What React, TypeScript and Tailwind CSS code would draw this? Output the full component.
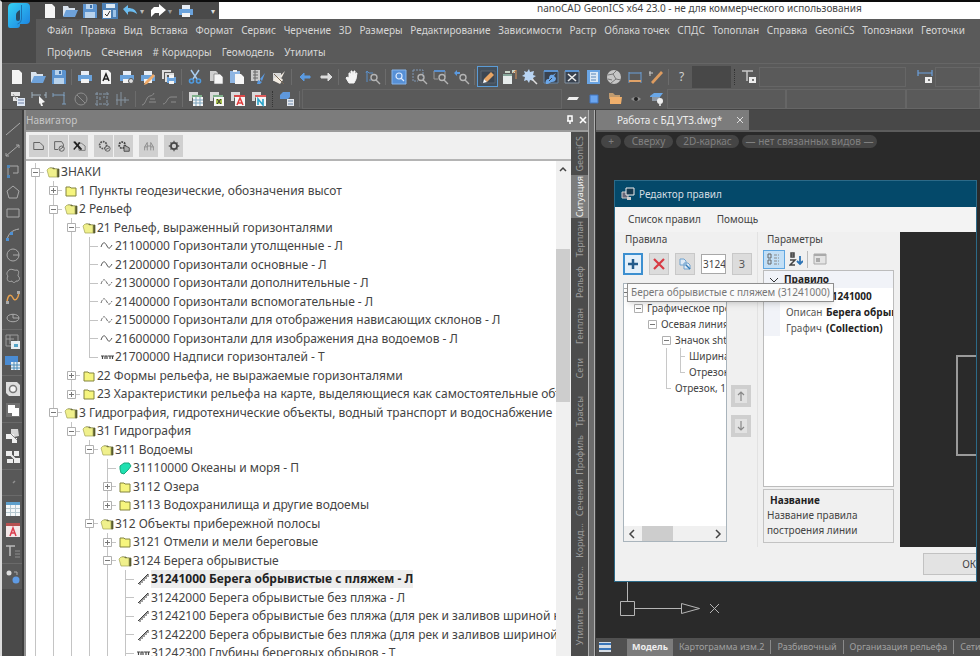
import type { ReactNode } from "react";
import clsx from "clsx";

const pageShape = <path d="M3 1h7l3 3v11H3z" fill="#f4f4f4" />;
const printerShape = (
  <>
    <path d="M4 2h8v4H4z" fill="#e8eef6" />
    <path d="M1 6h14v6H1z" fill="#6ba3dc" />
    <path d="M4 10h8v4H4z" fill="#f2f2f2" />
  </>
);
const lens = <path d="M12 8.500a3 3 0 1 1-6 0a3 3 0 0 1 6 0M11 11l4 4" fill="none" stroke="#b4b4b4" strokeWidth="1.400" />;
const sheets = (
  <>
    <path d="M1 1h9v3H4v6H1z" fill="#d9d9d9" />
    <path d="M4 4h10v3H4z" fill="#7fb08a" />
    <path d="M5 6h10v9H5z" fill="#f6f6f6" />
  </>
);

const icons: Record<string, ReactNode> = {
  page: pageShape,
  folder: (
    <>
      <path d="M1 3h5l1 2h6v8H1z" fill="#d9e3ee" />
      <path d="M4 7h12l-3 7H1z" fill="#6ea2da" />
    </>
  ),
  save: (
    <>
      <path d="M1 1h13l1 1v13H1z" fill="#5b93cf" />
      <path d="M4 1h7v5H4zM3 9h10v6H3z" fill="#b9d3ec" />
      <path d="M8 2h2v3H8z" fill="#3c6fa8" />
    </>
  ),
  saveAll: (
    <>
      <path d="M0 0h16v16H0z" fill="#4b7fb5" />
      <path d="M4 1h9v4H4z" fill="#dce9f5" />
      <path d="M1 7h8v8H1z" fill="#f4f4f4" />
      <path d="M3 11l2 2 3-5" fill="none" stroke="#333" />
      <path d="M11 7h3v7h-3z" fill="#9dc3e8" />
    </>
  ),
  undo: <path d="M1 6l5-4v3c5 0 8 2 9 6-3-2-5-3-9-2v3z" fill="#6cbdf0" />,
  redo: <path d="M16 7l-7-6v3H4L1 7v7l4-4h4v3z" fill="#fff" />,
  printer: printerShape,
  pageA: (
    <>
      {pageShape}
      <path d="M5 12l3-7 3 7M6 10h4" fill="none" stroke="#222" strokeWidth="1.500" />
    </>
  ),
  printGear: (
    <>
      {printerShape}
      <circle cx="12" cy="12" r="2.500" fill="#ddd" stroke="#555" />
    </>
  ),
  printPencil: (
    <>
      {printerShape}
      <path d="M5 13l8-8 2 2-8 8-3 1z" fill="#efaa68" />
    </>
  ),
  printStack: (
    <>
      <path d="M1 1h9v2H3v7H1z" fill="#ddd" />
      <path d="M4 4h9v2H6v7H4z" fill="#ddd" />
      <path d="M6 8h9v6H6z" fill="#6ba3dc" />
      <path d="M8 6h5v3H8zM8 12h5v3H8z" fill="#f4f4f4" />
    </>
  ),
  scissors: (
    <>
      <path d="M4 1l6 9M12 1L6 10" stroke="#a9cdf0" strokeWidth="1.500" />
      <path d="M6.500 12a2 2 0 1 1-4 0a2 2 0 0 1 4 0M13.500 12a2 2 0 1 1-4 0a2 2 0 0 1 4 0" fill="none" stroke="#4f9be0" strokeWidth="1.600" />
    </>
  ),
  copy: (
    <>
      <path d="M2 2h6l2 2v8H2z" fill="#cfcfcf" />
      <path d="M6 5h6l3 3v7H6z" fill="#f6f6f6" stroke="#666" strokeWidth=".6" />
    </>
  ),
  paste: (
    <>
      <path d="M1 2h10v12H1z" fill="#8eb5e2" />
      <path d="M4 1h4v2H4z" fill="#eee" />
      <path d="M6 5h6l3 3v7H6z" fill="#f6f6f6" />
    </>
  ),
  match: (
    <>
      <path d="M1 1h9v11H1z" fill="#c9c9c9" />
      <path d="M3 3h5M3 6h5M3 9h5M5 1v11" stroke="#666" />
      <path d="M15 4l-5 6 2 2zM8 11l4 2-2 2H7z" fill="#5b9ae0" />
    </>
  ),
  brush: (
    <>
      <path d="M2 4h8v8H2z" fill="#d8d8d8" />
      <path d="M14 2L8 8l2 2zM3 9l6-2 3 4-3 4-6-3z" fill="#f3ece2" />
      <path d="M3 5l3 3 7 7" stroke="#7a6a58" />
    </>
  ),
  back: <path d="M3 8l4-4v3h6v2H7v3z" fill="#5b9ae0" stroke="#5b9ae0" />,
  forward: <path d="M14 8l-4-4v3H3v2h7v3z" fill="#dcdcdc" stroke="#dcdcdc" />,
  hand: <path d="M5 14L2 9l1-1 2 1V4h1l1 3V2h1l1 4 1-4h1v5l1-3h1l-1 6-2 4z" fill="#f5f5f5" stroke="#f5f5f5" />,
  zoomLine: (
    <>
      <path d="M2 2v11M1 4l1-2 2 2M4 4h4M4 11h2" stroke="#5b8fc8" fill="none" />
      {lens}
    </>
  ),
  zoomBlue: (
    <>
      <path d="M1 1h14v14H1z" fill="#5790d6" stroke="#86b4ea" />
      <path d="M11 7a3 3 0 1 1-6 0a3 3 0 0 1 6 0M10 9l3 3" fill="none" stroke="#dceaff" strokeWidth="1.200" />
    </>
  ),
  zoomWin: (
    <>
      <path d="M1 1h10v9M1 1v11h5" fill="none" stroke="#7f97b5" strokeDasharray="2 1" />
      {lens}
    </>
  ),
  zoomSheet: (
    <>
      <path d="M1 2h11v6M1 2v8h4" fill="none" stroke="#999" />
      <path d="M1 1h11v2H1z" fill="#5a8fcd" />
      {lens}
    </>
  ),
  zoomPrev: (
    <>
      <path d="M0 4l3-3v2h3v2H3v2z" fill="#5b9ae0" />
      {lens}
    </>
  ),
  edit: (
    <>
      <path d="M1 2h14v12H1z" fill="#3c4652" stroke="#59636e" />
      <path d="M4 10l7-7 3 3-7 7z" fill="#e8a565" />
      <path d="M3 14l1-4 3 3z" fill="#fff" />
    </>
  ),
  props: (
    <>
      <path d="M4 2h5v2H4zM11 1h3v3h-3z" fill="#c7d4c7" />
      <path d="M2 5h9v10H2z" fill="#e7ecec" />
      <path d="M2 5h9v2H2z" fill="#87a79b" />
      <path d="M12 4l3-3v9" stroke="#d7925a" fill="none" />
    </>
  ),
  burst: (
    <>
      <path d="M7 0l1 3 4-1-1 4 3 1-3 2 1 3-4-1-1 3-2-3-3 1 1-4-3-1 3-2-1-3 3 1z" fill="#b9d4f3" />
      <path d="M10 10l5 5" stroke="#ddd" strokeWidth="1.500" />
    </>
  ),
  blueGear: (
    <>
      <path d="M1 2h14v12H1z" fill="#39424f" stroke="#6585a8" />
      <path d="M1 1h14v2H1z" fill="#5a92d0" />
      <path d="M3 15c-1-3 0-5 3-5 0-3 1-5 4-4l3-2-2 3 2 2c0 3-2 4-4 4s-2 2-6 2z" fill="#6ca7e8" />
      <path d="M6 12l3-3" stroke="#39424f" />
    </>
  ),
  tools: (
    <>
      <path d="M1 2h14v12H1z" fill="#39424f" stroke="#8493a3" />
      <path d="M1 1h14v2H1z" fill="#5a92d0" />
      <path d="M4 5l8 7M12 5l-8 7" stroke="#ececec" strokeWidth="1.600" />
    </>
  ),
  book: (
    <>
      <path d="M2 1h13v14H2z" fill="#6aa5e4" />
      <path d="M5 3h8v10H5z" fill="#dce9f6" />
      <path d="M6 5h5M6 8h5M6 11h5" stroke="#5a87b8" />
    </>
  ),
  ball: (
    <>
      <circle cx="8" cy="8" r="7" fill="#c6c6c6" />
      <path d="M2 6l5-1 4-4M7 5l3 5 5 1M10 10l-5 4M2 10l4 1" stroke="#777" fill="none" />
    </>
  ),
  ruler: (
    <>
      <path d="M2 3v11M14 3v11" stroke="#6b9fd8" />
      <path d="M2 4h12" stroke="#6b9fd8" />
      <path d="M2 12h12" stroke="#e0a268" strokeWidth="2" />
    </>
  ),
  measure: (
    <>
      <path d="M3 13L13 2l2 2L5 15z" fill="#dd9c60" />
      <path d="M2 2v5M1 4h4" stroke="#ccc" />
    </>
  ),
  textLock: (
    <>
      <path d="M1 2h11M6 2v10" stroke="#c9c9c9" strokeWidth="1.500" />
      <path d="M8 8h7v6H8z" fill="#eee" />
      <path d="M11 10h2v2h-2z" fill="#777" />
    </>
  ),
  dimLock: (
    <>
      <path d="M1 1v6M15 1v6M1 4h14" stroke="#6ba0dc" strokeWidth="1.200" />
      <path d="M8 8h7v6H8z" fill="#eee" />
      <path d="M11 10h2v2h-2z" fill="#777" />
    </>
  ),
  layers: (
    <>
      <path d="M1 1h9v4H1zM3 6h5v4H3z" fill="#e4e4e4" />
      <path d="M3 3l5 7" stroke="#999" />
      <path d="M7 7h8v8H7z" fill="#dfe8f4" />
      <path d="M8 9h6M8 12h6" stroke="#6e7fa5" />
    </>
  ),
  pick: (
    <>
      <path d="M1 1v6M15 1v6M1 4h9M13 4h2" stroke="#9fb0bd" fill="none" />
      <path d="M8 5l6 6-3 1 1 3-2 0-1-3-1 1z" fill="#f4f4f4" />
    </>
  ),
  dimDrop: <path d="M1 4h11v9M1 2v4M12 1v4M10 13h4" stroke="#7f9fbe" fill="none" />,
  forbid: <path d="M14 8a6 6 0 1 1-12 0a6 6 0 0 1 12 0M4 4l8 8" stroke="#8d8d8d" fill="none" />,
  frame: <path d="M1 3h14M1 13h14M3 1v14M13 1v14M6 6v4M9 6h2" stroke="#8597a8" fill="none" strokeDasharray="3 1" />,
  axes: <path d="M2 3v11M1 9h13M6 1v14M10 6v6" stroke="#8593a0" fill="none" />,
  leaderA: <path d="M1 14c3 0 4-6 6-8s4 0 6-4M8 11h7M9 8h5" stroke="#8c8c8c" fill="none" />,
  leaderB: <path d="M1 13c4 0 4-7 8-7h6M9 11h5" stroke="#8c8c8c" fill="none" />,
  sheetGrid: (
    <>
      {sheets}
      <path d="M5 9h10M5 12h10M8 6v9M12 6v9" stroke="#7aa3bd" />
    </>
  ),
  sheetX: (
    <>
      {sheets}
      <path d="M7 8h6v5H7z" fill="#a9c34e" />
      <path d="M8 8l4 5M12 8l-4 5" stroke="#333" />
    </>
  ),
  sheetA: (
    <>
      {sheets}
      <path d="M4 4h11v2H4z" fill="#d84848" />
      <path d="M7 14l3-7 3 7M8 12h4" stroke="#e03c3c" strokeWidth="1.500" fill="none" />
    </>
  ),
  sheetN: (
    <>
      {sheets}
      <path d="M4 4h11v2H4z" fill="#de5c5c" />
      <path d="M7 14V8l5 6V8" stroke="#2aa3c9" strokeWidth="1.600" fill="none" />
    </>
  ),
  blueLayer: (
    <>
      <path d="M1 4l3-3h7v5l-2 2H1z" fill="#5f98dc" />
      <path d="M8 8h7v7H8z" fill="#e4e8ee" />
      <path d="M9 10h5M9 13h5" stroke="#6a86a8" />
    </>
  ),
  slab: <path d="M4 6h10l-2 3H2z" fill="#efefef" />,
  square: <path d="M4 4h8v8H4z" fill="#6aa5f0" stroke="#4377c0" />,
  folderOrange: (
    <>
      <path d="M2 2h4l2 2h5v4H2z" fill="#bf9a6f" />
      <path d="M3 6h12l-1 7H3z" fill="#efaf6c" />
    </>
  ),
  eye: (
    <>
      <path d="M3 8c3-3 7-3 10 0-3 3-7 3-10 0z" fill="#8b8b8b" />
      <circle cx="8" cy="8" r="2" fill="#222" />
    </>
  ),
  blueTop: (
    <>
      <path d="M1 5l4-3h9l-3 4H1z" fill="#69a6e6" />
      <path d="M3 6h8v4H3z" fill="#8d98a5" />
      <circle cx="11" cy="10" r="3" fill="#eee" />
      <path d="M10 13h2v2h-2z" fill="#ccc" />
    </>
  ),
  line: <path d="M1 14L15 2" stroke="#a9a9a9" fill="none" />,
  ray: <path d="M1 14L14 3M11 3h3v3M1 11v3h3" stroke="#a9a9a9" fill="none" />,
  polyline: (
    <>
      <path d="M3 14V5M5 3h8v7H8" stroke="#a9a9a9" fill="none" />
      <path d="M2 2h3v3H2zM2 12h3v3H2z" fill="#4f86b8" />
    </>
  ),
  pentagon: <path d="M8 2l6 5-2 7H4L2 7z" stroke="#a9a9a9" fill="none" />,
  rect: <path d="M2 4h12v8H2z" stroke="#a9a9a9" fill="none" />,
  arc: (
    <>
      <path d="M2 14C3 8 7 4 14 3" stroke="#b4b4b4" fill="none" />
      <path d="M1 12h3v3H1zM5 6h3v3H5z" fill="#4f90d2" />
    </>
  ),
  circle: <path d="M14 8a6 6 0 1 1-12 0a6 6 0 0 1 12 0M8 8h6" stroke="#a9a9a9" fill="none" />,
  cloud: <path d="M4 2c3-2 5 1 8 0 3 1 1 4 1 6 3 2 1 6-2 5-1 2-3 2-4 0-4 2-6-2-4-5C1 6 2 4 4 2z" stroke="#a9a9a9" fill="none" />,
  spline: (
    <>
      <path d="M2 13C3 5 6 5 8 9s5 1 6-5" stroke="#e6a04e" strokeWidth="1.500" fill="none" />
      <path d="M1 12h3v3H1zM12 2h3v3h-3z" fill="#aaa" />
    </>
  ),
  ellipse: <path d="M14 8c0 5-12 5-12 0s12-5 12 0M8 4v4h6" stroke="#a9a9a9" fill="none" />,
  block: (
    <>
      <path d="M1 1h12v6M1 1v11h5M1 5h8M5 1v9" stroke="#9b9b9b" fill="none" />
      <path d="M6 7h9v8H6z" fill="#e8edf2" />
      <path d="M9 10h4v3H9z" fill="#54a4c8" />
    </>
  ),
  blockBlue: (
    <>
      <path d="M0 1h13v9H0z" fill="#4a8bd2" />
      <path d="M6 7h9v8H6z" fill="#e8edf2" />
      <path d="M6 10h9M6 13h9M9 7v8M12 7v8" stroke="#4a8bb8" />
    </>
  ),
  donut: (
    <>
      <path d="M1 1h11l3 3v11H4l-3-3z" fill="#dedede" />
      <circle cx="8" cy="8" r="3.500" fill="#f5f5f5" stroke="#777" strokeWidth="1.500" />
    </>
  ),
  region: (
    <>
      <path d="M1 1h14v14H1z" fill="#707070" />
      <path d="M3 3h7v3h4v8H7v-3H3z" fill="#fff" />
    </>
  ),
  group: (
    <>
      <path d="M6 1h7l1 7-5 1-3-3z" fill="#d6d6d6" />
      <path d="M1 6h8v5H1zM7 10h5v5H7z" fill="#efefef" />
      <path d="M6 6l6 6" stroke="#888" />
    </>
  ),
  ungroup: (
    <>
      <path d="M1 2h6v5H1zM9 2h5v5H9zM2 10h6v4H2zM9 9h6v5H9z" fill="#ececec" />
      <path d="M4 4l8 8" stroke="#ececec" strokeWidth="2" />
    </>
  ),
  point: <path d="M8 8l2-2" stroke="#919191" strokeWidth="1.500" />,
  table: (
    <>
      <path d="M1 1h14v14H1z" fill="#f4f7f8" />
      <path d="M1 1h14v3H1z" fill="#5fa0cc" />
      <path d="M1 7.500h14M1 11.500h14M5.500 4v11M10.500 4v11" stroke="#b5c7cf" />
    </>
  ),
  tableA: (
    <>
      <path d="M1 1h14v14H1z" fill="#f4e8e8" />
      <path d="M1 1h14v3H1z" fill="#b65050" />
      <path d="M5 14l3-8 3 8M6 11h4" stroke="#dc3c4c" strokeWidth="1.500" fill="none" />
    </>
  ),
  text: (
    <>
      <path d="M1 3h9M5 3v10" stroke="#b9b9b9" strokeWidth="1.500" />
      <path d="M10 8h5M10 11h5M10 14h5" stroke="#8d8d8d" />
    </>
  ),
  dotsBlue: (
    <>
      <circle cx="4" cy="4" r="2.500" fill="#ddd" />
      <circle cx="11" cy="11" r="3.500" fill="#5f9be4" />
      <path d="M9 3h3v3" stroke="#aaa" fill="none" />
    </>
  ),
  navNew: <path d="M2 4h7l4 4v4H2z" stroke="#555" fill="none" />,
  navEdit: (
    <>
      <path d="M3 3h8l2 3v2M3 3v9h4" stroke="#555" fill="none" />
      <circle cx="11" cy="11" r="3" stroke="#555" fill="none" />
      <path d="M9 12l4-3" stroke="#555" />
    </>
  ),
  navDelete: (
    <>
      <path d="M7 4l4 1 4 3v5H8z" stroke="#777" fill="none" />
      <path d="M2 3l8 9M2 12l7-8M3 3l8 9" stroke="#222" strokeWidth="1.600" />
    </>
  ),
  navGearEdit: (
    <>
      <circle cx="7" cy="7" r="4" stroke="#555" strokeWidth="2" strokeDasharray="2 1" fill="none" />
      <circle cx="12" cy="11" r="3" stroke="#555" fill="#ccc" />
      <path d="M10 12l4-2" stroke="#555" />
    </>
  ),
  navGears: (
    <>
      <circle cx="6" cy="7" r="3.500" stroke="#444" strokeWidth="2" strokeDasharray="2 1" fill="none" />
      <path d="M8 7l6 3v4H8z" stroke="#444" fill="#aaa" />
    </>
  ),
  navFind: <path d="M3 13V9l3-5v9M3 9h3M10 13V4l3 5v4M10 9h3M6 8h4" stroke="#888" fill="none" />,
  navGear: (
    <>
      <circle cx="8" cy="8" r="3.500" stroke="#444" strokeWidth="2" fill="none" />
      <path d="M8 2v2M8 12v2M2 8h2M12 8h2M4 4l1 1M11 11l1 1M12 4l-1 1M5 11l-1 1" stroke="#555" strokeWidth="1.500" />
    </>
  ),
};

function Icon({ name, className = "size-4" }: { name: string; className?: string }) {
  return (
    <svg viewBox="0 0 16 16" className={clsx("block shrink-0", className)} aria-hidden="true">
      {icons[name]}
    </svg>
  );
}

function Tools({ names, active, cell = "h-[21px] w-[21px]" }: { names: string[]; active?: string; cell?: string }) {
  return (
    <>
      {names.map((name) => (
        <button
          key={name}
          aria-label={name}
          className={clsx(
            "flex shrink-0 items-center justify-center",
            cell,
            active === name && "bg-[#44505c] ring-1 ring-[#5b9bd5] ring-inset",
          )}
        >
          <Icon name={name} />
        </button>
      ))}
    </>
  );
}

function Sep() {
  return <div className="mx-[2px] h-4 w-px shrink-0 bg-[#6c6c6c]" />;
}

function Grip() {
  return <div className="mx-[3px] h-4 w-px shrink-0 border-l border-dotted border-[#343434]" />;
}

function Combo({ label, className }: { label: string; className: string }) {
  return <select aria-label={label} className={clsx("h-5 appearance-none border border-[#666] bg-[#5a5a5a]", className)} />;
}

const menuTop = [
  "Файл", "Правка", "Вид", "Вставка", "Формат", "Сервис", "Черчение", "3D", "Размеры", "Редактирование",
  "Зависимости", "Растр", "Облака точек", "СПДС", "Топоплан", "Справка", "GeoniCS", "Топознаки", "Геоточки",
];
const menuBottom = ["Профиль", "Сечения", "# Коридоры", "Геомодель", "Утилиты"];

function Header() {
  return (
    <header className="shrink-0 bg-[#5a5a5a]">
      <div className="flex">
        <div className="h-[61px] w-[34px] shrink-0 bg-[#4a4a4a] pl-1">
          <svg viewBox="0 0 26 28" className="h-7 w-[26px]" aria-label="nanoCAD">
            <defs>
              <linearGradient id="logo" x1="0" y1="0" x2="1" y2="1">
                <stop offset="0" stopColor="#35d2f5" />
                <stop offset="1" stopColor="#1b7fe0" />
              </linearGradient>
            </defs>
            <path d="M7 1h13q4 0 4 4v13q0 4-4 4h-6v1q0 3-3 3H4q-2 0-2-2V6q0-5 5-5z" fill="url(#logo)" />
            <path d="M14 8v9q0 2-2 2t-2-2v-4q0-3 4-5z" fill="#2b4a62" />
            <path d="M15.500 3v14q0 4-4 5" stroke="#1c72b4" fill="none" />
          </svg>
        </div>
        <div className="min-w-0 flex-1">
          <div className="flex h-[17px]">
            <div className="flex w-[183px] shrink-0 items-center bg-[#4a4a4a] pl-1">
              <Tools names={["page", "folder", "save", "saveAll", "undo"]} cell="h-5 w-5" />
              <span className="w-2 text-[8px] text-[#bbb]">▾</span>
              <Tools names={["redo"]} cell="h-5 w-5" />
              <span className="w-2 text-[8px] text-[#999]">▾</span>
              <Tools names={["printer"]} cell="h-5 w-5" />
              <span className="ml-auto pr-1 text-[8px] text-[#ddd]">▾</span>
            </div>
            <h1 className="flex-1 bg-white pl-[318px] text-[10px] leading-[13px] whitespace-nowrap text-[#444]">
              nanoCAD GeonICS x64 23.0 - не для коммерческого использования
            </h1>
          </div>
          <nav className="flex h-[22px] items-center justify-between pr-[15px] pl-[11px] text-[10px] text-[#d6d6d6]">
            {menuTop.map((item) => (
              <button key={item} className="whitespace-nowrap">{item}</button>
            ))}
          </nav>
          <nav className="flex h-[22px] items-center gap-[10px] pl-[11px] text-[10px] text-[#d6d6d6]">
            {menuBottom.map((item) => (
              <button key={item} className="whitespace-nowrap">{item}</button>
            ))}
          </nav>
        </div>
      </div>
      <div className="flex h-[26px] items-center border-t border-[#666] pl-1">
        <Tools names={["page", "folder", "save"]} />
        <Sep />
        <Tools names={["printer", "pageA", "printGear", "printPencil", "printStack"]} />
        <Sep />
        <Tools names={["scissors", "copy", "paste", "match", "brush"]} />
        <Sep />
        <Tools names={["back", "forward"]} />
        <Sep />
        <Tools names={["hand", "zoomLine"]} />
        <Sep />
        <Tools names={["zoomBlue", "zoomWin", "zoomSheet", "zoomPrev"]} />
        <Sep />
        <Tools names={["edit", "props", "burst", "blueGear", "tools", "book", "ball", "ruler", "measure"]} active="edit" />
        <Sep />
        <button className="w-[21px] shrink-0 text-xs text-[#d0d0d0]">?</button>
        <div className="h-[22px] w-[39px] shrink-0 bg-[#484848]" />
        <Grip />
        <Tools names={["textLock"]} />
        <Combo label="Стиль текста" className="w-[147px]" />
        <div className="w-2 shrink-0" />
        <Tools names={["dimLock"]} />
        <Combo label="Размерный стиль" className="min-w-0 flex-1" />
      </div>
      <div className="flex h-[21px] items-center border-b border-[#444] pl-[5px]">
        <Tools names={["layers", "pick", "dimDrop", "forbid", "frame", "axes"]} />
        <Sep />
        <Tools names={["leaderA", "leaderB"]} />
        <Sep />
        <Tools names={["sheetGrid", "sheetX", "sheetA", "sheetN"]} />
        <Grip />
        <Tools names={["blueLayer"]} />
        <Sep />
        <Combo label="Слой" className="w-[260px]" />
        <Tools names={["slab", "square", "folderOrange", "eye", "blueTop"]} />
        <Combo label="Цвет" className="w-[119px]" />
        <Combo label="Тип линии" className="w-[120px]" />
        <Combo label="Вес линии" className="min-w-0 flex-1" />
      </div>
    </header>
  );
}

function DrawTools() {
  return (
    <aside className="w-5 shrink-0 overflow-hidden bg-[#4a4a4a]">
      <div className="flex flex-col bg-[#585858] pt-2 pb-[2px]">
        <Tools names={["line", "ray", "polyline", "pentagon", "rect", "arc", "circle", "cloud", "spline", "ellipse"]} />
        <hr className="my-px border-[#6a6a6a]" />
        <Tools names={["block", "blockBlue"]} />
        <hr className="my-[2px] border-[#6a6a6a]" />
        <Tools names={["donut", "region"]} />
        <hr className="my-[2px] border-[#6a6a6a]" />
        <Tools names={["group", "ungroup"]} />
        <hr className="my-[2px] border-[#6a6a6a]" />
        <Tools names={["point"]} />
        <hr className="my-[2px] border-[#6a6a6a]" />
        <Tools names={["table", "tableA", "text"]} />
        <hr className="my-[2px] border-[#6a6a6a]" />
        <Tools names={["dotsBlue"]} />
      </div>
    </aside>
  );
}

type Kind = "open" | "closed" | "wave" | "dash" | "label" | "sea" | "cliff";
type Node = { level: number; kind: Kind; text: string; last?: boolean; selected?: boolean };

const nodes: Node[] = [
  { level: 0, kind: "open", text: "ЗНАКИ" },
  { level: 1, kind: "closed", text: "1 Пункты геодезические, обозначения высот" },
  { level: 1, kind: "open", text: "2 Рельеф" },
  { level: 2, kind: "open", text: "21 Рельеф, выраженный горизонталями" },
  { level: 3, kind: "wave", text: "21100000 Горизонтали утолщенные - Л" },
  { level: 3, kind: "wave", text: "21200000 Горизонтали основные - Л" },
  { level: 3, kind: "dash", text: "21300000 Горизонтали дополнительные - Л" },
  { level: 3, kind: "dash", text: "21400000 Горизонтали вспомогательные - Л" },
  { level: 3, kind: "dash", text: "21500000 Горизонтали для отображения нависающих склонов - Л" },
  { level: 3, kind: "wave", text: "21600000 Горизонтали для изображения дна водоемов - Л" },
  { level: 3, kind: "label", text: "21700000 Надписи горизонталей - Т", last: true },
  { level: 2, kind: "closed", text: "22 Формы рельефа, не выражаемые горизонталями" },
  { level: 2, kind: "closed", text: "23 Характеристики рельефа на карте, выделяющиеся как самостоятельные объекты", last: true },
  { level: 1, kind: "open", text: "3 Гидрография, гидротехнические объекты, водный транспорт и водоснабжение" },
  { level: 2, kind: "open", text: "31 Гидрография" },
  { level: 3, kind: "open", text: "311 Водоемы" },
  { level: 4, kind: "sea", text: "31110000 Океаны и моря - П" },
  { level: 4, kind: "closed", text: "3112 Озера" },
  { level: 4, kind: "closed", text: "3113 Водохранилища и другие водоемы", last: true },
  { level: 3, kind: "open", text: "312 Объекты прибережной полосы" },
  { level: 4, kind: "closed", text: "3121 Отмели и мели береговые" },
  { level: 4, kind: "open", text: "3124 Берега обрывистые" },
  { level: 5, kind: "cliff", text: "31241000 Берега обрывистые с пляжем - Л", selected: true },
  { level: 5, kind: "cliff", text: "31242000 Берега обрывистые без пляжа - Л" },
  { level: 5, kind: "cliff", text: "31242100 Берега обрывистые без пляжа (для рек и заливов шриной на плане)" },
  { level: 5, kind: "cliff", text: "31242200 Берега обрывистые без пляжа (для рек и заливов шириной на плане)" },
  { level: 5, kind: "label", text: "31242300 Глубины береговых обрывов - Т" },
];

const glyphs: Record<Kind, ReactNode> = {
  open: (
    <>
      <path d="M4 3h4l1 1h4v8h-2z" fill="#5d5f30" stroke="#55562c" strokeWidth=".7" />
      <path d="M1 5l2-2h3l1 1h4v8H3z" fill="#f0f08c" stroke="#a2a355" strokeWidth=".7" />
    </>
  ),
  closed: <path d="M2 3h4l1 1h5v8H2z" fill="#f6f57e" stroke="#83843f" />,
  wave: <path d="M1 8c2-6 4-5 6-1s3 2 5-1" stroke="#555" fill="none" />,
  dash: <path d="M1 8c2-6 4-5 6-1s3 2 5-1" stroke="#666" fill="none" strokeDasharray="3 1" />,
  label: <path d="M1 6h3M2.500 6v3M5 9V6h2v3M8 6h2v3M10 6h4M12.500 6v3" stroke="#444" strokeWidth="1.200" fill="none" />,
  sea: <path d="M2 5l4-3h5l2 3-3 4-4 4-3-1-1-4z" fill="#1fe0b0" stroke="#17a87c" />,
  cliff: <path d="M2 12L12 2M4 10v3M6 8v3M8 6v3M10 4v3M12 2v3" stroke="#3f3f3f" fill="none" />,
};

function Expander({ open }: { open: boolean }) {
  return (
    <svg viewBox="0 0 9 9" className="block size-[9px] shrink-0" aria-hidden="true">
      <path d="M.5.5h8v8h-8z" fill="#fff" stroke="#b0b0b0" />
      <path d={open ? "M2 4.500h5" : "M2 4.500h5M4.500 2v5"} stroke="#777" />
    </svg>
  );
}

function TreeRow({ node }: { node: Node }) {
  const folder = node.kind === "open" || node.kind === "closed";
  return (
    <li className="flex even:h-[19px] odd:h-[18px]">
      {Array.from({ length: node.level }, (_, i) => (
        <span key={i} className="flex w-[18px] shrink-0 justify-center">
          <span className="w-px bg-[#c4c4c4]" />
        </span>
      ))}
      <span className="grid w-[18px] shrink-0 items-center justify-items-center">
        <span className={clsx("col-start-1 row-start-1 w-px bg-[#c4c4c4]", node.last ? "h-1/2 self-start" : "h-full")} />
        <span className="col-start-1 row-start-1 h-px w-[9px] justify-self-end bg-[#c4c4c4]" />
        {folder && (
          <button className="col-start-1 row-start-1" aria-label={node.text}>
            <Expander open={node.kind === "open"} />
          </button>
        )}
      </span>
      <svg viewBox="0 0 14 14" className="mr-px ml-[2px] size-[14px] shrink-0 self-center" aria-hidden="true">
        {glyphs[node.kind]}
      </svg>
      <span
        className={clsx(
          "self-center text-[12px] leading-[18px] whitespace-nowrap",
          node.selected ? "bg-[#ededed] font-bold text-[#222]" : "text-[#444]",
        )}
      >
        {node.text}
      </span>
    </li>
  );
}

const sideTabs = [
  "GeoniCS", "Ситуация", "Терплан", "Рельеф", "Генплан", "Сети", "Трассы",
  "Профиль", "Сечения", "Корид...", "Геомо...", "Утилиты", "и",
];

function Navigator() {
  return (
    <section className="flex w-[564px] shrink-0 flex-col border-l-2 border-[#909090] bg-[#7c7c7c]">
      <div className="flex h-5 shrink-0 items-center text-[10px] text-[#c6c6c6]">
        <h2 className="flex-1">Навигатор</h2>
        <button aria-label="Закрепить">
          <svg viewBox="0 0 10 10" className="mr-[3px] size-[10px]">
            <path d="M3 1h4v5H3zM2 6h6M5 6v3" fill="none" stroke="#fff" strokeWidth="1.500" />
          </svg>
        </button>
        <button aria-label="Закрыть">
          <svg viewBox="0 0 10 10" className="size-[10px]">
            <path d="M2 2l6 6M8 2L2 8" stroke="#fff" strokeWidth="1.600" />
          </svg>
        </button>
      </div>
      <div className="flex min-h-0 flex-1 border-t-2 border-[#9b9b9b]">
        <div className="flex min-w-0 flex-1 flex-col">
          <div className="flex h-[29px] shrink-0 items-center gap-px border-b-2 border-[#b4b4b4] bg-[#f0f0f0] pl-[3px]">
            {["navNew", "navEdit", "navDelete", "", "navGearEdit", "navGears", "", "navFind", "", "navGear"].map((name, i) =>
              name ? (
                <button key={i} aria-label={name} className="flex h-[22px] w-[19px] items-center justify-center bg-[#d0d0d0]">
                  <Icon name={name} className="size-[14px]" />
                </button>
              ) : (
                <span key={i} className="w-1" />
              ),
            )}
          </div>
          <div className="flex min-h-0 flex-1 bg-white">
            <ul className="min-w-0 flex-1 overflow-hidden pt-[2px]">
              {nodes.map((node) => (
                <TreeRow key={node.text} node={node} />
              ))}
            </ul>
            <div className="flex w-[15px] shrink-0 flex-col bg-[#f0f0f0]">
              <svg viewBox="0 0 15 16" className="h-4 w-[15px]">
                <path d="M4 10l3-3 3 3" fill="none" stroke="#444" strokeWidth="1.500" />
              </svg>
              <div className="mt-[72px] h-[153px] w-[14px] bg-[#cdcdcd]" />
            </div>
          </div>
        </div>
        <div className="flex w-[17px] shrink-0 flex-col overflow-hidden bg-[#4c4c4c]">
          {sideTabs.map((tab) => (
            <button
              key={tab}
              className={clsx(
                "flex h-[43px] shrink-0 items-center justify-center text-[9px] leading-[17px]",
                tab === "Ситуация" ? "bg-[#7c7c7c] text-[#eee]" : "text-[#9c9c9c]",
              )}
            >
              <span className="rotate-180 whitespace-nowrap [writing-mode:vertical-rl]">{tab}</span>
            </button>
          ))}
        </div>
      </div>
    </section>
  );
}

type Rule = { level: number; text: string; leaf?: boolean; last?: boolean };

const ruleTree: Rule[] = [
  { level: 0, text: "Берега обрывистые" },
  { level: 1, text: "Графическое представление" },
  { level: 2, text: "Осевая линия" },
  { level: 3, text: "Значок shtrih" },
  { level: 4, text: "Ширина", leaf: true },
  { level: 4, text: "Отрезок", leaf: true, last: true },
  { level: 3, text: "Отрезок, 1", leaf: true, last: true },
];

function RuleRow({ rule }: { rule: Rule }) {
  return (
    <li className="-ml-1 flex h-4 items-center">
      {Array.from({ length: rule.level }, (_, i) => (
        <span key={i} className="flex h-full w-[14px] shrink-0 justify-center pr-[5px]">
          {i === 3 && <span className="w-px bg-[#c8c8c8]" />}
        </span>
      ))}
      {rule.leaf ? (
        <span className="grid h-full w-[9px] shrink-0 items-center justify-items-center">
          <span className={clsx("col-start-1 row-start-1 w-px bg-[#c8c8c8]", rule.last ? "h-1/2 self-start" : "h-full")} />
          <span className="col-start-1 row-start-1 h-px w-[5px] justify-self-end bg-[#c8c8c8]" />
        </span>
      ) : (
        <Expander open />
      )}
      <span className="pl-1 text-[10px] leading-4 whitespace-nowrap text-[#444]">{rule.text}</span>
    </li>
  );
}

function RulesGroup() {
  const square = "flex h-[22px] w-5 items-center justify-center border border-[#c8c8c8] bg-[#dcdcdc] text-[11px] text-[#555]";
  return (
    <section className="flex w-[143px] shrink-0 flex-col border-r border-[#e2e2e2] pb-[5px] pl-2">
      <h3 className="pl-[2px] text-[10px] leading-[14px] text-[#444]">Правила</h3>
      <div className="flex h-8 items-center gap-[6px] pt-1">
        <button aria-label="Добавить" className="flex h-[22px] w-5 items-center justify-center border-2 border-[#3c8fd0] bg-[#e4f0fa]">
          <svg viewBox="0 0 12 12" className="size-3"><path d="M6 1v10M1 6h10" stroke="#245c8c" strokeWidth="2.500" /></svg>
        </button>
        <button aria-label="Удалить" className={square}>
          <svg viewBox="0 0 12 12" className="size-3"><path d="M1 1l10 10M11 1L1 11" stroke="#d83a44" strokeWidth="2.200" /></svg>
        </button>
        <button aria-label="Копировать" className={square}>
          <svg viewBox="0 0 14 14" className="size-[14px]">
            <path d="M2 2h4l2 2v4H2zM6 6h4l2 2v4H6z" fill="#dfeaf5" stroke="#6fa2cf" />
            <path d="M8 8l4 4" stroke="#347cb8" strokeWidth="1.500" />
          </svg>
        </button>
        <input aria-label="Код" defaultValue="31241000" className="h-5 w-[25px] border border-[#a8a8a8] bg-white pl-px text-[10px] text-[#444]" />
        <button className={square}>3</button>
      </div>
      <div className="mt-[5px] flex min-h-0 flex-1 gap-1">
        <div className="flex w-[104px] shrink-0 flex-col border border-[#a9b4bc] bg-white">
          <ul className="flex-1 overflow-hidden">
            {ruleTree.map((rule) => (
              <RuleRow key={rule.text} rule={rule} />
            ))}
          </ul>
          <div className="flex h-[15px] items-center bg-[#f0f0f0]">
            <svg viewBox="0 0 16 14" className="h-[14px] w-4"><path d="M10 3L6 7l4 4" stroke="#444" strokeWidth="1.500" fill="none" /></svg>
            <div className="mx-[2px] h-full w-[31px] bg-[#cdcdcd]" />
            <svg viewBox="0 0 16 14" className="ml-auto h-[14px] w-4"><path d="M6 3l4 4-4 4" stroke="#444" strokeWidth="1.500" fill="none" /></svg>
          </div>
        </div>
        <div className="flex flex-col gap-2 pt-[102px]">
          <button aria-label="Вверх" className="flex h-[22px] w-5 items-center justify-center border-4 border-[#cfcfcf] bg-[#e2e2e2]">
            <svg viewBox="0 0 8 12" className="h-3 w-2"><path d="M4 2v9M1 5l3-3 3 3" stroke="#888" strokeWidth="1.200" fill="none" /></svg>
          </button>
          <button aria-label="Вниз" className="flex h-[22px] w-5 items-center justify-center border-4 border-[#cfcfcf] bg-[#e2e2e2]">
            <svg viewBox="0 0 8 12" className="h-3 w-2"><path d="M4 1v9M1 7l3 3 3-3" stroke="#888" strokeWidth="1.200" fill="none" /></svg>
          </button>
        </div>
      </div>
    </section>
  );
}

const params = [
  ["Название", "31241000"],
  ["Описание", "Берега обрывистые"],
  ["Графич", "(Collection)"],
];

function ParamsGroup() {
  return (
    <section className="flex w-[142px] shrink-0 flex-col pr-[6px] pb-1 pl-[5px]">
      <h3 className="pl-1 text-[10px] leading-[14px] text-[#444]">Параметры</h3>
      <div className="flex h-6 items-center pt-[2px]">
        <button aria-label="По категориям" className="flex h-[19px] w-[22px] items-center justify-center border border-[#5fa6e0] bg-[#c2dff6]">
          <svg viewBox="0 0 14 14" className="size-[14px]">
            <path d="M1 2h3v4H1zM1 8h3v4H1z" fill="none" stroke="#666" />
            <path d="M7 3h5M7 6h5M7 9h5M7 12h5" stroke="#8a8a8a" strokeDasharray="3 1" />
          </svg>
        </button>
        <button aria-label="По алфавиту" className="flex h-[19px] w-[22px] items-center justify-center">
          <svg viewBox="0 0 14 14" className="size-[14px]">
            <path d="M2 1h3v4H2zM2 3h3M1 8h5l-5 5h5" fill="none" stroke="#444" strokeWidth="1.500" />
            <path d="M11 4v8M8 9l3 3 3-3" fill="none" stroke="#2c73b5" strokeWidth="1.800" />
          </svg>
        </button>
        <div className="h-[17px] w-px bg-[#bbb]" />
        <button aria-label="Страницы свойств" className="flex h-[19px] w-[24px] items-center justify-center">
          <svg viewBox="0 0 14 14" className="size-[14px]">
            <path d="M1 2h12v10H1z" fill="#e4e4e4" stroke="#aaa" />
            <path d="M1 2h12v2H1zM3 6h4v4H3z" fill="#aaa" />
          </svg>
        </button>
      </div>
      <div className="flex-1 overflow-hidden border border-[#bcbcbc] bg-white">
        <div className="flex h-[17px] items-center bg-[#f1f3f8]">
          <svg viewBox="0 0 12 12" className="mr-1 ml-1 size-3"><path d="M2 4l4 4 4-4" fill="none" stroke="#333" /></svg>
          <h4 className="text-[10px] font-bold text-[#222]">Правило</h4>
        </div>
        <table className="w-full table-fixed text-[10px] leading-4">
          <tbody>
            {params.map(([name, value]) => (
              <tr key={name}>
                <td className="w-4 bg-[#f1f3f8] p-0" />
                <th className="w-[43px] overflow-hidden p-0 pl-[6px] text-left font-normal whitespace-nowrap text-[#555]">{name}</th>
                <td className="overflow-hidden p-0 pl-[3px] font-bold whitespace-nowrap text-[#222]">{value}</td>
              </tr>
            ))}
          </tbody>
        </table>
      </div>
      <div className="mt-[2px] h-[54px] shrink-0 border border-[#c3c3c3] px-[3px] pt-[3px] text-[10px] leading-[15px] text-[#444]">
        <h4 className="pl-[3px] font-bold text-[#222]">Название</h4>
        <p>Название правила построения линии</p>
      </div>
    </section>
  );
}

function RuleEditor() {
  return (
    <div role="dialog" aria-label="Редактор правил" className="absolute top-[48px] right-[3px] left-[18px] flex h-[402px] flex-col border border-[#2c6a88]">
      <div className="flex h-[26px] shrink-0 items-center bg-[#04496a] pl-[6px]">
        <svg viewBox="0 0 14 14" className="size-[14px]">
          <path d="M1 5h6v6H1z" fill="#667" stroke="#ccc" />
          <path d="M5 1h8v7H5z" fill="#173a50" stroke="#eee" />
          <path d="M6 10h4v3H6z" fill="#ccc" />
        </svg>
        <h2 className="pl-1 text-[10px] text-[#d4dde3]">Редактор правил</h2>
      </div>
      <nav className="flex h-[25px] shrink-0 items-center gap-4 bg-[#f3f3f3] pl-[13px] text-[10px] text-[#444]">
        <button>Список правил</button>
        <button>Помощь</button>
      </nav>
      <div className="flex min-h-0 flex-1">
        <div className="flex shrink-0 bg-[#f0f0f0]">
          <RulesGroup />
          <ParamsGroup />
        </div>
        <div className="min-w-0 flex-1 bg-[#2a2a2a] pt-[123px] pl-[56px]">
          <div className="h-[101px] border-y-2 border-l-2 border-[#9a9a9a]" />
        </div>
      </div>
      <div className="flex h-[34px] shrink-0 items-center justify-end bg-[#f0f0f0]">
        <button className="h-[22px] w-[53px] border border-r-0 border-[#c2c2c2] bg-[#e3e3e3] text-right text-[10px] text-[#444]">ОК</button>
      </div>
      <div role="tooltip" className="absolute top-[102px] left-[12px] border border-[#8e8e8e] bg-[#fafafa] px-[3px] text-[10px] leading-[17px] whitespace-nowrap text-[#777] shadow-md">
        Берега обрывистые с пляжем (31241000)
      </div>
    </div>
  );
}

const layouts = ["Картограмма изм.2", "Разбивочный", "Организация рельефа", "Сети"];

function Workspace() {
  return (
    <main className="flex min-w-0 flex-1 flex-col bg-[#2a2a2a]">
      <div className="h-[22px] shrink-0 border-b-2 border-[#5c5c5c] bg-[#484848]">
        <div className="flex h-5 w-[153px] items-center bg-[#7c7c7c] pr-1 pl-[21px] text-[10px] text-[#eee]">
          <span className="flex-1">Работа с БД УТЗ.dwg*</span>
          <button aria-label="Закрыть">
            <svg viewBox="0 0 10 10" className="size-[10px]"><path d="M2 2l6 6M8 2L2 8" stroke="#ddd" /></svg>
          </button>
        </div>
      </div>
      <div className="relative min-h-0 flex-1 overflow-hidden">
        <div className="flex gap-[3px] pt-[3px] pl-[5px] text-[10px] leading-[13px] whitespace-nowrap text-[#808080]">
          <button className="w-5 rounded-full bg-[#454545]">+</button>
          <button className="w-[49px] rounded-full bg-[#454545]">Сверху</button>
          <button className="w-[63px] rounded-full bg-[#454545]">2D-каркас</button>
          <button className="w-[135px] rounded-full bg-[#454545]">— нет связанных видов —</button>
        </div>
        <svg viewBox="0 0 110 50" className="absolute bottom-[18px] left-5 h-[50px] w-[110px]" aria-hidden="true">
          <path d="M11.500 0v31M4.500 31.500h14v14h-14zM18 38.500h47M65.500 33.500v10l18-5z" fill="none" stroke="#b5b5b5" />
          <path d="M94 34l9 9M103 34l-9 9" stroke="#b5b5b5" />
        </svg>
        <RuleEditor />
      </div>
      <div className="flex h-[18px] shrink-0 items-center overflow-hidden bg-[#505050] text-[9px] whitespace-nowrap text-[#a0a0a0]">
        <svg viewBox="0 0 12 12" className="mx-[3px] h-3 w-3 shrink-0">
          <path d="M0 1h12v10H0z" fill="#d5dde6" />
          <path d="M0 3h12M0 8h12" stroke="#3a75b8" strokeWidth="2" />
        </svg>
        <button className="ml-[13px] h-[17px] w-[46px] shrink-0 bg-[#7c7c7c] font-bold text-[#eee]">Модель</button>
        {layouts.map((name) => (
          <button key={name} className="shrink-0 border-r border-[#8a8a8a] px-[6px]">{name}</button>
        ))}
      </div>
    </main>
  );
}

export default function App() {
  return (
    <div className="flex h-screen flex-col overflow-hidden border-t-2 border-l-2 border-t-[#0c0c0c] border-l-[#dcdcdc] bg-[#4a4a4a] font-['Noto_Sans','Open_Sans',sans-serif]">
      <Header />
      <div className="flex min-h-0 flex-1">
        <DrawTools />
        <div className="w-[2px] shrink-0 bg-[#3e3e3e]" />
        <Navigator />
        <div className="w-[7px] shrink-0 border-x border-[#b0b0b0] bg-[#6c6c6c]" />
        <div className="w-px shrink-0 bg-[#3e3e3e]" />
        <Workspace />
      </div>
    </div>
  );
}
